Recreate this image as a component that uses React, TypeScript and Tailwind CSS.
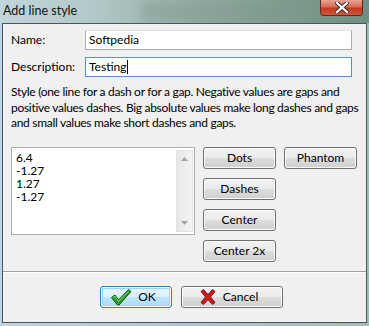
import React from "react";

const font = { fontFamily: 'Lato, "Open Sans", sans-serif' };

function WinButton({
  children,
  className = "",
  isDefault = false,
}: {
  children: React.ReactNode;
  className?: string;
  isDefault?: boolean;
}) {
  return (
    <div
      className={
        "flex items-center justify-center rounded-[3px] border h-[22px] text-[12px] text-black " +
        (isDefault
          ? "border-[#3c7fb1] bg-[linear-gradient(#eaf6fd_0%,#d9f0fc_50%,#bee6fd_50%,#a7d9f5_100%)] shadow-[inset_0_0_0_1px_#ffffff,inset_0_0_0_2px_#9ad6f5] "
          : "border-[#707070] bg-[linear-gradient(#f2f2f2_0%,#ebebeb_50%,#dddddd_50%,#cfcfcf_100%)] shadow-[inset_0_0_0_1px_#fcfcfc] ") +
        className
      }
    >
      {children}
    </div>
  );
}

export default function App() {
  return (
    <div
      className="relative w-[369px] h-[326px] overflow-hidden flex flex-col bg-[linear-gradient(90deg,#bcd3e3,#a9c7d9_50%,#9fbfae)]"
      style={font}
    >
      {/* title bar */}
      <div className="relative h-[23px] shrink-0 bg-[linear-gradient(90deg,#c3d5dc_0%,#b3c8c8_25%,#93aba0_55%,#7d9a8c_80%,#6f8f82_100%)] overflow-hidden">
        <div className="absolute left-[140px] top-[2px] w-[170px] h-[20px] rounded-[6px] bg-[#7f958f] opacity-40 blur-[4px]" />
        <div className="absolute left-[3px] top-[2px] text-[12.5px] text-[#111] leading-[18px]">
          Add line style
        </div>
        <div className="absolute left-[320px] top-0 w-[43px] h-[16px] rounded-b-[4px] border border-t-0 border-[#5b2a22] bg-[linear-gradient(#e8a493_0%,#d86a55_45%,#c2391f_55%,#d0583c_100%)] flex items-center justify-center">
          <svg width="14" height="11" viewBox="0 0 14 11">
            <path
              d="M2 1 L12 10 M12 1 L2 10"
              stroke="#3a2a2a"
              strokeWidth="4"
              strokeLinecap="square"
            />
            <path
              d="M2 1 L12 10 M12 1 L2 10"
              stroke="#ffffff"
              strokeWidth="2.2"
              strokeLinecap="square"
            />
          </svg>
        </div>
      </div>

      {/* client area */}
      <div className="flex-1 mx-[2px] mb-[3px] border border-[#4a5560] bg-[#f0f0f0] flex flex-col relative">
        <div className="pt-[6px] pl-[8px] flex flex-col">
          <div className="flex items-center h-[20px]">
            <div className="w-[74px] text-[12px] text-black">Name:</div>
            <div className="w-[267px] h-[20px] border border-[#abadb3] border-t-[#e3e3e3] bg-white pl-[3px] text-[12px] leading-[18px] text-black">
              Softpedia
            </div>
          </div>
          <div className="flex items-center h-[20px] mt-[7px]">
            <div className="w-[74px] text-[12px] text-black">Description:</div>
            <div className="w-[267px] h-[20px] border border-[#5593c8] bg-white pl-[3px] text-[12px] leading-[18px] text-black flex items-center">
              <span>Testing</span>
              <span className="w-[1px] h-[14px] bg-black ml-[1px]" />
            </div>
          </div>
          <div className="mt-[7px] text-[12px] leading-[15.5px] tracking-[-0.3px] text-black whitespace-nowrap">
            <div>Style (one line for a dash or for a gap. Negative values are gaps and</div>
            <div>positive values dashes. Big absolute values make long dashes and gaps</div>
            <div>and small values make short dashes and gaps.</div>
          </div>
          <div className="flex mt-[16.5px]">
            <div className="relative w-[184px] h-[88px] border border-[#abadb3] bg-white flex">
              <div className="flex-1 pl-[4px] pt-[3px] text-[12px] leading-[13px] text-black">
                <div>6.4</div>
                <div>-1.27</div>
                <div>1.27</div>
                <div>-1.27</div>
              </div>
              <div className="w-[17px] my-[2px] mr-[1px] border border-[#e3e3e3] bg-[linear-gradient(90deg,#e8e8e8,#f4f4f4)] flex flex-col justify-between items-center py-[6px]">
                <svg width="7" height="4" viewBox="0 0 7 4">
                  <path d="M0 4 L3.5 0 L7 4 Z" fill="#a3a3a3" />
                </svg>
                <svg width="7" height="4" viewBox="0 0 7 4">
                  <path d="M0 0 L3.5 4 L7 0 Z" fill="#a3a3a3" />
                </svg>
              </div>
            </div>
            <div className="ml-[8px] flex flex-col gap-[9px]">
              <WinButton className="w-[73px]">Dots</WinButton>
              <WinButton className="w-[73px]">Dashes</WinButton>
              <WinButton className="w-[73px]">Center</WinButton>
              <WinButton className="w-[73px]">Center 2x</WinButton>
            </div>
            <div className="ml-[8px]">
              <WinButton className="w-[73px]">Phantom</WinButton>
            </div>
          </div>
        </div>
        <div className="mt-[9px] h-[2px] border-t border-[#a0a0a0] border-b border-b-white" />
        <div className="flex pl-[97px] mt-[13px] gap-[9px]">
          <WinButton isDefault className="w-[72px] gap-[6px]">
            <svg width="22" height="18" viewBox="0 0 22 18">
              <path
                d="M1.5 9.5 L5 7 L8.5 12 L18.5 1.5 L21 3.5 L9 17 L7.5 17 Z"
                fill="#2ba12b"
                stroke="#0d4d0d"
                strokeWidth="1"
                strokeLinejoin="round"
              />
              <path d="M3 9.6 L5 8.3 L8.6 13.2 L18.6 3" stroke="#8fe08f" strokeWidth="0.8" fill="none" />
            </svg>
            <span className="mr-[6px]">OK</span>
          </WinButton>
          <WinButton className="w-[102px] gap-[7px]">
            <svg width="16" height="16" viewBox="0 0 16 16">
              <path
                d="M1 2.5 L3.5 0.5 L8 5.5 L12.5 0.5 L15 2.5 L10.5 8 L15 13.5 L12.5 15.5 L8 10.5 L3.5 15.5 L1 13.5 L5.5 8 Z"
                fill="#d21a1a"
                stroke="#6a0a0a"
                strokeWidth="0.9"
                strokeLinejoin="round"
              />
            </svg>
            <span className="mr-[6px]">Cancel</span>
          </WinButton>
        </div>
      </div>
    </div>
  );
}
